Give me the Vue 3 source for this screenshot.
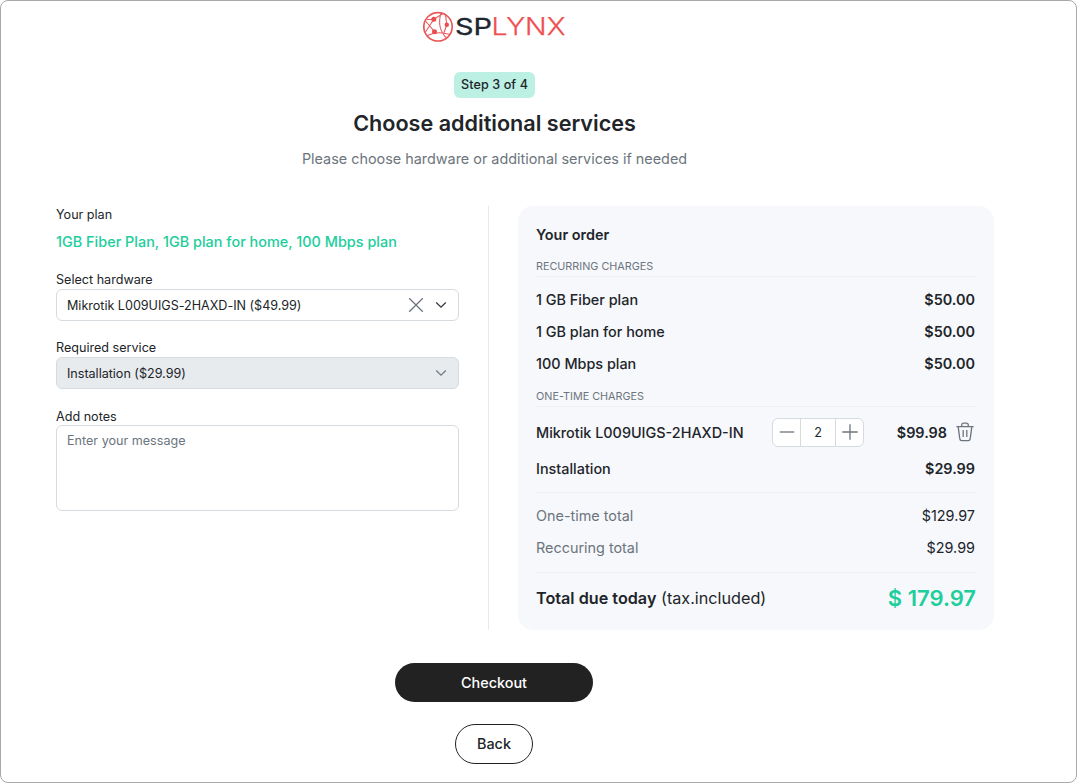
<script setup>
const recurring = [
  { name: '1 GB Fiber plan', price: '$50.00' },
  { name: '1 GB plan for home', price: '$50.00' },
  { name: '100 Mbps plan', price: '$50.00' },
]
</script>

<template>
  <main class="page">
    <header class="head">
      <svg class="logo" width="144" height="34" viewBox="0 0 144 34">
        <g fill="none" stroke="#ea5a5c">
          <circle cx="15" cy="16.8" r="14.2" stroke-width="1.7" />
          <path d="M4 9.5L10.8 9.3L20 3.5M2.5 11L11.5 21.7M10.8 9.3L2.5 22M18 3Q13.5 18 23.5 28M4.5 25.5Q14 20.5 27 24.5M23.8 14.7L22.5 5M23.8 14.7L20.5 24" stroke-width="1.1" />
        </g>
        <g fill="#ea4d50">
          <circle cx="10.8" cy="9.3" r="2.5" /><circle cx="23.8" cy="14.7" r="2.2" /><circle cx="11.5" cy="21.7" r="2.5" />
        </g>
        <text x="32" y="25.3" font-size="23.5" font-weight="400" fill="#20262d" stroke="#20262d" stroke-width=".3" textLength="37" lengthAdjust="spacingAndGlyphs">SP</text>
        <text x="68.5" y="25.3" font-size="23.5" font-weight="300" fill="#ee4f51" stroke="#ee4f51" stroke-width=".25" textLength="74" lengthAdjust="spacingAndGlyphs">LYNX</text>
      </svg>
      <span class="step">Step 3 of 4</span>
      <h1>Choose additional services</h1>
      <p class="sub">Please choose hardware or additional services if needed</p>
    </header>

    <div class="columns">
      <section class="form">
        <div class="label">Your plan</div>
        <div class="plans">1GB Fiber Plan, 1GB plan for home, 100 Mbps plan</div>
        <div class="label hw">Select hardware</div>
        <div class="select">
          <span>Mikrotik L009UIGS-2HAXD-IN ($49.99)</span>
          <svg class="clear" width="16" height="16" viewBox="0 0 16 16"><path d="M1.2 1.2L14.8 14.8M14.8 1.2L1.2 14.8" /></svg>
          <svg class="chev" width="12" height="8" viewBox="0 0 12 8"><path d="M1.2 1.5L6 6.2L10.8 1.5" /></svg>
        </div>
        <div class="label">Required service</div>
        <div class="select disabled">
          <span>Installation ($29.99)</span>
          <svg class="chev" width="12" height="8" viewBox="0 0 12 8"><path d="M1.2 1.5L6 6.2L10.8 1.5" /></svg>
        </div>
        <div class="label">Add notes</div>
        <div class="notes">Enter your message</div>
      </section>

      <section class="order">
        <h2>Your order</h2>
        <div class="group">RECURRING CHARGES</div>
        <div v-for="item in recurring" :key="item.name" class="row">
          <span>{{ item.name }}</span><b>{{ item.price }}</b>
        </div>
        <div class="group once">ONE-TIME CHARGES</div>
        <div class="row device">
          <span>Mikrotik L009UIGS-2HAXD-IN</span>
          <div class="stepper">
            <i><svg width="16" height="16" viewBox="0 0 16 16"><path d="M.8 8H15.2" /></svg></i>
            <em>2</em>
            <i><svg width="16" height="16" viewBox="0 0 16 16"><path d="M.3 8H15.7M8 .3V15.7" /></svg></i>
          </div>
          <b class="amount">$99.98</b>
          <svg class="trash" width="18" height="20" viewBox="0 0 18 20">
            <path d="M.4 4.6H17.6M5.7 4.4V3.2Q5.7 1.1 7.8 1.1H10.2Q12.3 1.1 12.3 3.2V4.4M2.2 4.8L3.8 16.9Q4 18.6 5.7 18.6H12.3Q14 18.6 14.2 16.9L15.8 4.8M7.2 8V15M10.8 8V15" />
          </svg>
        </div>
        <div class="row install"><span>Installation</span><b>$29.99</b></div>
        <div class="totals">
          <div class="row"><span>One-time total</span><span class="value">$129.97</span></div>
          <div class="row"><span>Reccuring total</span><span class="value">$29.99</span></div>
        </div>
        <div class="due">
          <span><b>Total due today</b> (tax.included)</span>
          <strong>$ 179.97</strong>
        </div>
      </section>
    </div>

    <footer class="actions">
      <button class="checkout">Checkout</button>
      <button class="back">Back</button>
    </footer>
  </main>
</template>

<style>
body { background: #fff; }
</style>

<style scoped>
* { box-sizing: border-box; }
.page {
  width: 1077px; height: 783px; padding: 9px 82px 0 55px;
  border: 1px solid #a9a9a9; border-radius: 8px; background: #fff;
  font-family: Inter, "Liberation Sans", sans-serif; color: #212529; overflow: hidden;
}
.head { display: flex; flex-direction: column; align-items: center; width: 877px; }
.logo { display: block; font-family: Inter, sans-serif; }
.step {
  margin-top: 28px; height: 26px; width: 81px; border-radius: 6px; background: #bcf0e2;
  font-size: 12.6px; font-weight: 500; line-height: 26px; text-align: center; letter-spacing: .08px;
}
h1 { margin: 10px 0 0; font-size: 21.6px; font-weight: 600; line-height: 30px; white-space: nowrap; }
.sub { margin: 10px 0 0; font-size: 14.4px; line-height: 22px; color: #6c757d; white-space: nowrap; }
.columns { display: flex; margin-top: 36px; height: 424px; }
.form { width: 433px; padding-right: 29px; border-right: 1px solid #e6e9ef; }
.label { font-size: 12.6px; line-height: 18px; white-space: nowrap; }
.plans { margin-top: 8px; font-size: 14.4px; line-height: 20px; font-weight: 500; letter-spacing: .02px; color: #20ce9c; white-space: nowrap; }
.hw { margin-top: 19px; }
.select {
  display: flex; align-items: center; height: 32px; margin-bottom: 18.4px; padding: 0 11px 0 10px;
  border: 1px solid #d6dbe0; border-radius: 6px; font-size: 12.6px; letter-spacing: -.02px; background: #fff;
}
.select span { flex: 1; }
svg path { fill: none; }
.clear { margin-right: 11px; stroke: #6c757d; stroke-width: 1.3; }
.chev { stroke: #343a40; stroke-width: 1.3; }
.disabled { background: #e8ebee; }
.disabled .chev { stroke: #737b83; }
.notes { height: 86px; margin-top: -.5px; padding: 6px 10px; border: 1px solid #d6dbe0; border-radius: 6px; font-size: 12.6px; line-height: 18px; color: #6c757d; }
.order { width: 476px; margin-left: 29px; padding: 18px 18px 0; border-radius: 15px; background: #f7f8fc; }
h2 { margin: 0; font-size: 14.4px; font-weight: 600; line-height: 22px; }
.group { margin-top: 13px; height: 18px; border-bottom: 1px solid #edeff2; font-size: 10.8px; line-height: 16px; color: #6c757d; margin-bottom: 6px; }
.once { margin: 9px 0 0; }
.row { display: flex; align-items: center; justify-content: space-between; height: 32.4px; padding-right: 1px; font-size: 14.4px; font-weight: 500; white-space: nowrap; }
.row b { font-weight: 600; }
.device { height: 50px; }
.stepper { display: flex; width: 92px; height: 29px; margin-left: auto; border: 1px solid #d6dbe0; border-radius: 6px; background: #fff; }
.stepper i { display: flex; width: 27px; align-items: center; justify-content: center; }
.stepper em { flex: 1; border: solid #d6dbe0; border-width: 0 1px; font-size: 12.6px; font-style: normal; font-weight: 400; line-height: 27px; text-align: center; }
.stepper svg, .trash { stroke: #6c757d; stroke-width: 1.3; }
.amount { width: 83px; text-align: right; }
.trash { margin-left: 9px; margin-right: 1px; }
.install { height: 22px; }
.totals { margin-top: 13px; padding: 6px 0 8px; border: solid #edeff2; border-width: 1px 0; }
.totals .row { font-weight: 400; color: #6c757d; }
.totals .value { color: #212529; }
.due { display: flex; justify-content: space-between; align-items: center; height: 50px; font-size: 16.2px; white-space: nowrap; }
.due b { font-weight: 600; }
.due strong { font-size: 22px; font-weight: 600; color: #20ce9c; }
.actions { display: flex; flex-direction: column; align-items: center; gap: 22px; width: 876px; margin-top: 33px; }
button { padding: 0; border-radius: 20px; font: 500 14.4px Inter, sans-serif; }
.checkout { width: 198px; height: 39px; border: 0; background: #222; color: #fff; }
.back { width: 78px; height: 40px; padding-bottom: 2px; border: 1px solid #222; background: #fff; color: #212529; }
</style>
